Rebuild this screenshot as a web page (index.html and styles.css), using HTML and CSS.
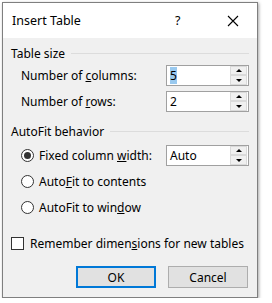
FILE: index.html
```html
<!DOCTYPE html>
<html lang="en">
<head>
    <meta charset="UTF-8">
    <title>Insert Table</title>
    <link rel="stylesheet" href="styles.css">
</head>
<body>
    <div class="dialog">
        <div class="titlebar">
            <span class="title">Insert Table</span>
            <span class="help">?</span>
            <svg class="close" width="12" height="12" viewBox="0 0 12 12">
                <path d="M1 1 L11 11 M11 1 L1 11" stroke="#000" stroke-width="1.1" fill="none"/>
            </svg>
        </div>

        <div class="content">
            <div class="group-head"><span>Table size</span><div class="rule"></div></div>
            <div class="row">
                <span class="label">Number of <u>c</u>olumns:</span>
                <div class="spin">
                    <span class="value"><span class="sel">5</span></span>
                    <div class="arrows"><div class="up"></div><div class="down"></div></div>
                </div>
            </div>
            <div class="row">
                <span class="label">Number of <u>r</u>ows:</span>
                <div class="spin">
                    <span class="value">2</span>
                    <div class="arrows"><div class="up"></div><div class="down"></div></div>
                </div>
            </div>

            <div class="group-head second"><span>AutoFit behavior</span><div class="rule"></div></div>
            <div class="row">
                <span class="radio-label"><span class="radio checked"></span><span>Fixed column <u>w</u>idth:</span></span>
                <div class="spin">
                    <span class="value">Auto</span>
                    <div class="arrows"><div class="up"></div><div class="down"></div></div>
                </div>
            </div>
            <div class="row">
                <span class="radio-label"><span class="radio"></span><span>Auto<u>F</u>it to contents</span></span>
            </div>
            <div class="row">
                <span class="radio-label"><span class="radio"></span><span>AutoFit to win<u>d</u>ow</span></span>
            </div>

            <div class="check-row">
                <span class="checkbox"></span><span>Remember dimen<u>s</u>ions for new tables</span>
            </div>

            <div class="buttons">
                <button class="btn default">OK</button>
                <button class="btn">Cancel</button>
            </div>
        </div>
    </div>
</body>
</html>
```

FILE: styles.css
```css
* {
    margin: 0;
    padding: 0;
    box-sizing: border-box;
    font-family: 'Noto Sans', sans-serif;
}

body {
    background: #ffffff;
    color: #000000;
    font-size: 12px;
}

.dialog {
    margin: 2px 0 0 2px;
    width: 256px;
    height: 296px;
    border: 1px solid #7f7f7f;
    background: #f0f0f0;
    box-shadow: 1px 1px 3px rgba(0, 0, 0, 0.35);
    display: flex;
    flex-direction: column;
}

.titlebar {
    height: 35px;
    background: #ffffff;
    display: flex;
    align-items: center;
    padding-left: 9px;
    font-size: 12.5px;
}

.title {
    flex: 1;
}

.help {
    width: 12px;
    margin-right: 40px;
}

.close {
    margin-right: 18px;
}

.content {
    padding: 7px 8px 0 8px;
    display: flex;
    flex-direction: column;
}

.group-head {
    display: flex;
    align-items: center;
    gap: 6px;
    height: 17px;
}

.group-head .rule {
    flex: 1;
    height: 1px;
    background: #dcdcdc;
}

.group-head.second {
    margin-top: 9px;
    margin-bottom: 2px;
}

.row {
    display: flex;
    align-items: center;
    justify-content: space-between;
    height: 26px;
    padding-left: 10px;
}

.spin {
    width: 83px;
    height: 21px;
    border: 1px solid #a0a0a0;
    background: #ffffff;
    display: flex;
    align-items: center;
}

.value {
    flex: 1;
    padding-left: 3px;
}

.sel {
    background: #99c9ef;
}

.arrows {
    width: 17px;
    height: 19px;
    display: flex;
    flex-direction: column;
    margin-right: 1px;
}

.arrows div {
    flex: 1;
    background: #f0f0f0;
    border: 1px solid #dadada;
    position: relative;
}

.arrows div::after {
    content: '';
    position: absolute;
    left: 5px;
    border-left: 3px solid transparent;
    border-right: 3px solid transparent;
}

.arrows .up::after {
    top: 2px;
    border-bottom: 3px solid #000;
}

.arrows .down::after {
    top: 3px;
    border-top: 3px solid #000;
}

.radio-label {
    display: flex;
    align-items: center;
}

.radio {
    width: 13px;
    height: 13px;
    border: 1px solid #333;
    border-radius: 50%;
    background: #fff;
    margin-right: 5px;
    display: flex;
    align-items: center;
    justify-content: center;
}

.radio.checked::after {
    content: '';
    width: 7px;
    height: 7px;
    border-radius: 50%;
    background: #333;
}

.check-row {
    display: flex;
    align-items: center;
    margin-top: 15px;
    height: 16px;
}

.checkbox {
    width: 13px;
    height: 13px;
    border: 1px solid #333;
    background: #fff;
    margin-right: 6px;
}

.buttons {
    display: flex;
    justify-content: flex-end;
    gap: 12px;
    margin-top: 15px;
    padding-right: 1px;
}

.btn {
    width: 80px;
    height: 22px;
    background: #e1e1e1;
    border: 1px solid #adadad;
    font-size: 12px;
    color: #000;
}

.btn.default {
    border: 2px solid #0078d7;
}
```
